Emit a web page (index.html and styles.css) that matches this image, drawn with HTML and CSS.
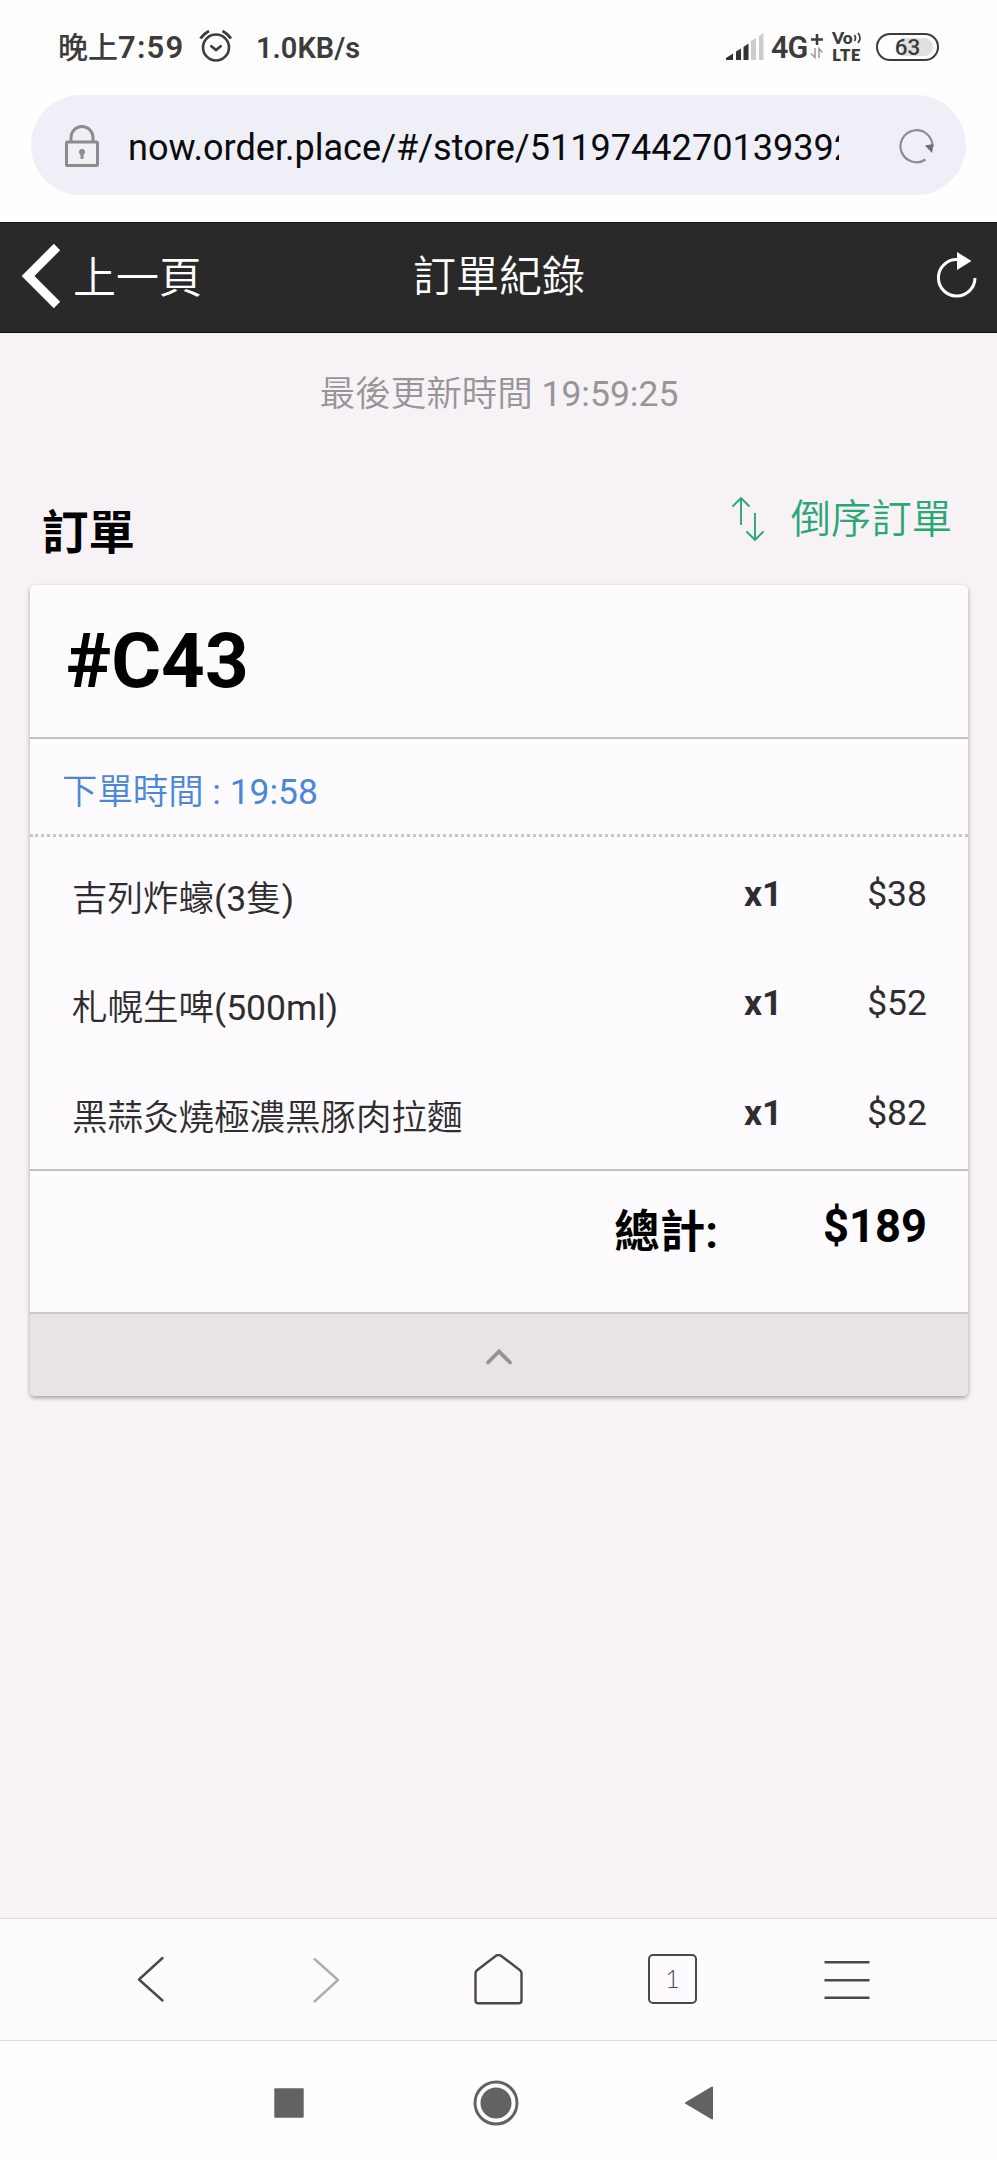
FILE: index.html
```html
<!DOCTYPE html>
<html lang="zh-Hant">
<head>
<meta charset="utf-8">
<title>訂單紀錄</title>
<link rel="stylesheet" href="styles.css">
</head>
<body>
<div class="status">
  <span class="clock">晚上<b>7:59</b></span>
  <svg class="alarm" width="34" height="34" viewBox="0 0 34 34" fill="none" stroke="#3c3c3c" stroke-width="2.6"><circle cx="17" cy="18.5" r="13"/><path d="M11.5 16.5l5.5 4.5 5.500-4.500"/><path d="M1.500 9.500Q5 4.500 10 2M32 9.500Q28.500 4.500 23.500 2" stroke-width="3"/></svg>
  <span class="speed">1.0KB/s</span>
  <svg class="signal" width="38" height="28" viewBox="0 0 38 28"><path fill="#333" d="M0 27v-2l7-4.500V27zM10 18.500l5-3V27h-5zM17.500 14l5-3.500V27h-5z"/><path fill="#ccc" d="M25 8l5-3v22h-5zM33 3l4.500-3v27H33z"/></svg>
  <span class="net">4G</span>
  <svg class="plus" width="14" height="28" viewBox="0 0 14 28" fill="none" stroke="#3c3c3c"><path d="M7 1v11M1 6.500h12" stroke-width="2.500"/><path d="M5 15v9.500L1 20.500M9 25v-9.500l3.500 4" stroke="#999" stroke-width="1.500"/></svg>
  <span class="volte"><span>Vo<svg width="9" height="12" viewBox="0 0 9 12" fill="none" stroke="#3c3c3c" stroke-width="1.700"><path d="M1.500 3q2 3 0 6M5 1q4 5 0 10"/></svg></span><span>LTE</span></span>
  <span class="battery">63</span>
</div>
<div class="address">
  <svg class="lock" width="34" height="42" viewBox="0 0 34 42" fill="none" stroke="#8c8c90" stroke-width="3"><rect x="1.500" y="17" width="31" height="23.500" rx="1" fill="#f1f1f3"/><path d="M6 17v-4.500a11 11 0 0 1 22 0V17"/><circle cx="17" cy="27" r="3" fill="#8c8c90" stroke="none"/><path d="M17 27v7"/></svg>
  <span class="url">now.order.place/#/store/511974427013939250</span>
  <svg class="reload" width="36" height="36" viewBox="0 0 36 36" fill="none" stroke="#8c8c90" stroke-width="2.200"><path d="M26.500 31.500A16 16 0 1 1 33.500 19"/><path d="M26 17.500l8.500-1.500-1.500 9z" fill="#6f6f73" stroke="none"/></svg>
</div>
<header class="topbar">
  <div class="back"><svg width="40" height="66" viewBox="0 0 40 66" fill="none" stroke="#fff" stroke-width="9"><path d="M36 4L7 33l29 29"/></svg><span>上一頁</span></div>
  <h1>訂單紀錄</h1>
  <svg class="refresh" width="40" height="48" viewBox="0 0 40 48" fill="none" stroke="#fff" stroke-width="3"><path d="M20.500 8.500A18.300 18.300 0 1 0 38 27"/><path d="M20 1l14.500 9L20 19z" fill="#fff" stroke="none"/></svg>
</header>
<main>
  <p class="updated"><span class="thin">最後更新時間</span> 19:59:25</p>
  <div class="heading">
    <h2>訂單</h2>
    <div class="sort"><svg width="34" height="46" viewBox="0 0 34 46" fill="none" stroke="#2aa775" stroke-width="1.900"><path d="M10 29V2M1.500 10.500L10 2l8.500 8.500M24 17v27M15.500 35.500L24 44l8.500-8.500"/></svg><span>倒序訂單</span></div>
  </div>
  <section class="card">
    <div class="number">#C43</div>
    <div class="time"><span class="thin">下單時間</span> : 19:58</div>
    <div class="items">
      <div class="row"><span class="name"><span class="thin">吉列炸蠔</span>(3<span class="thin">隻</span>)</span><b class="qty">x1</b><span class="price">$38</span></div>
      <div class="row"><span class="name"><span class="thin">札幌生啤</span>(500ml)</span><b class="qty">x1</b><span class="price">$52</span></div>
      <div class="row"><span class="name"><span class="thin">黑蒜灸燒極濃黑豚肉拉麵</span></span><b class="qty">x1</b><span class="price">$82</span></div>
    </div>
    <div class="total"><span class="label">總計:</span><span class="sum">$189</span></div>
    <div class="fold"><svg width="28" height="18" viewBox="0 0 28 18" fill="none" stroke="#969296" stroke-width="3.800" stroke-linecap="round"><path d="M3 15.500L14 4.500l11 11"/></svg></div>
  </section>
</main>
<nav class="browser">
  <svg width="50" height="52" viewBox="0 0 50 52" fill="none" stroke="#4b484b" stroke-width="2.400" stroke-linecap="round" stroke-linejoin="round"><path d="M36.500 4L13 25.500 36.500 46.500"/></svg>
  <svg width="50" height="52" viewBox="0 0 50 52" fill="none" stroke="#b0adb1" stroke-width="2.400" stroke-linecap="round" stroke-linejoin="round"><path d="M14.500 5L38 26 14.500 47.500"/></svg>
  <svg width="50" height="52" viewBox="0 0 50 52" fill="none" stroke="#4b484b" stroke-width="2.400" stroke-linejoin="round"><path d="M22 1.800Q24.500 .2 27 1.800L46 16.200Q47.500 17.400 47.500 19V46.500Q47.500 49.300 44.700 49.300H4.300Q1.500 49.300 1.500 46.500V19Q1.500 17.400 3 16.200Z"/></svg>
  <span class="tabs">1</span>
  <svg width="50" height="52" viewBox="0 0 50 52" fill="none" stroke="#4b484b" stroke-width="2.600"><path d="M2.500 8.300h45M2.500 26.200h45M2.500 43.800h45"/></svg>
</nav>
<div class="system">
  <svg width="30" height="30" viewBox="0 0 30 30"><rect x=".3" y=".3" width="29.400" height="29.400" rx="1" fill="#616361"/></svg>
  <svg width="46" height="46" viewBox="0 0 46 46"><circle cx="23" cy="23" r="21" fill="none" stroke="#616361" stroke-width="3"/><circle cx="23" cy="23" r="15.500" fill="#616361"/></svg>
  <svg width="30" height="34" viewBox="0 0 30 34" fill="#616361" stroke="#616361" stroke-width="2" stroke-linejoin="round"><path d="M28 1.500v31L2 17z"/></svg>
</div>
</body>
</html>
```
FILE: styles.css
```css
* { box-sizing: border-box; }
body {
  margin: 0;
  width: 997px;
  height: 2160px;
  display: flex;
  flex-direction: column;
  overflow: hidden;
  background: #fefefe;
  font-family: Roboto, "Noto Sans CJK TC", sans-serif;
  color: #000;
}
svg { display: block; flex: none; }
h1, h2, p { margin: 0; }
.thin { font-weight: 350; }

.status {
  flex: none;
  display: flex;
  align-items: center;
  height: 95px;
  padding: 0 55px 0 58px;
  color: #3c3c3c;
  line-height: 40px;
  white-space: nowrap;
}
.status > * { flex: none; }
.clock { width: 141px; font-size: 30px; font-weight: 500; }
.clock b { font-size: 31px; font-weight: 600; letter-spacing: 1.2px; }
.alarm { margin-top: -3px; }
.speed { width: 493px; padding-left: 23px; font-size: 29px; font-weight: 600; }
.signal { margin-top: -2px; margin-right: 7px; }
.net { width: 39px; font-size: 30.5px; font-weight: 600; letter-spacing: -1px; }
.plus { margin-top: -2px; margin-right: 8px; }
.volte {
  width: 44px;
  display: flex;
  flex-direction: column;
  font: 800 17px/16.5px Lato, sans-serif;
  margin-top: -2px;
}
.volte span { display: flex; align-items: center; }
.volte span + span { letter-spacing: .4px; }
.battery {
  width: 63px;
  height: 28px;
  border: 2.5px solid #3c3c3c;
  border-radius: 14px;
  background: linear-gradient(90deg, transparent 38%, #e0e0e0 38%) content-box;
  padding: 3px 4px;
  font-size: 22.5px;
  font-weight: 500;
  line-height: 18px;
  text-align: center;
  margin-top: -2px;
}

.address {
  flex: none;
  display: flex;
  align-items: center;
  height: 100px;
  margin: 0 31px;
  padding: 0 31px 0 34px;
  border-radius: 50px;
  background: #eeeff7;
}
.url {
  width: 711px;
  margin: 5px 0 0 29px;
  overflow: hidden;
  font-size: 36.1px;
  line-height: 50px;
  white-space: nowrap;
  color: #0b0b0e;
}
.lock { margin-bottom: -2px; }
.reload { margin-left: auto; margin-top: 2px; }

.topbar {
  flex: none;
  display: grid;
  grid-template-columns: 1fr auto 1fr;
  align-items: center;
  height: 111px;
  margin-top: 27px;
  padding: 0 20px 0 21px;
  background: #292929;
  border-top: 1px solid #111;
  border-bottom: 1px solid #111;
  color: #fff;
}
.back { display: flex; align-items: center; gap: 12px; margin-top: -3px; }
.back span, .topbar h1 { font-size: 43px; line-height: 60px; font-weight: 350; }
.back span { margin-top: 4px; }
.topbar h1 { margin-top: -1px; }
.refresh { justify-self: end; margin-top: -6px; }

main {
  flex: 1;
  min-height: 0;
  background: #f7f2f6;
}
.updated {
  padding: 36px 0 0 1px;
  text-align: center;
  font-size: 35.5px;
  line-height: 50px;
  color: #989498;
}
.heading {
  display: flex;
  justify-content: space-between;
  height: 166px;
  padding: 0 45px 0 42px;
}
.heading h2 { margin-top: 84px; font-size: 46.5px; line-height: 60px; font-weight: 700; }
.sort {
  display: flex;
  align-items: flex-start;
  gap: 26px;
  margin-top: 77px;
  color: #2aa775;
  font-size: 40.3px;
  line-height: 48px;
  font-weight: 350;
}
.card {
  height: 811px;
  margin: 0 29px 0 30px;
  border-radius: 5px;
  background: #fdfbfe;
  box-shadow: 0 2px 4px rgba(0, 0, 0, .35);
  overflow: hidden;
}
.number {
  height: 154px;
  padding-left: 36px;
  border-bottom: 2px solid #c2c0c3;
  font-size: 76.3px;
  line-height: 153px;
  font-weight: 700;
}
.time {
  height: 98px;
  padding: 5px 31px 0 32px;
  border-bottom: 3px dotted #c8c6c9;
  color: #4a87d8;
  font-size: 35.4px;
  line-height: 96px;
}
.items {
  height: 334px;
  padding: 8px 41px 0 42px;
  border-bottom: 2px solid #c2c0c3;
  color: #2f2d30;
  font-size: 35.5px;
}
.row { display: flex; height: 109.3px; line-height: 109px; }
.name { flex: 1; }
.qty, .price { margin-top: -5px; }
.qty { width: 79px; font-weight: 700; }
.price { width: 104px; text-align: right; }
.total {
  display: flex;
  justify-content: flex-end;
  height: 141px;
  padding: 26px 41px 0;
  font-size: 45.3px;
  font-weight: 700;
  line-height: 60px;
}
.label { margin-top: 6px; font-size: 45.5px; }
.sum { width: 209px; text-align: right; }
.fold {
  display: flex;
  justify-content: center;
  height: 84px;
  padding-top: 33px;
  border-top: 2px solid #cbc7ca;
  background: #e8e3e7;
}

.browser {
  flex: none;
  display: grid;
  grid-template-columns: repeat(5, 174px);
  justify-content: center;
  justify-items: center;
  height: 123px;
  padding-top: 35px;
  border-top: 1px solid #dedbdf;
  border-bottom: 1px solid #dfdfe0;
  background: #fdfbfe;
}
.tabs {
  width: 49px;
  height: 50px;
  border: 2.5px solid #4b484b;
  border-radius: 5px;
  color: #4b484b;
  font: 300 25px/44px Lato, sans-serif;
  text-align: center;
}
.system {
  flex: none;
  display: flex;
  align-items: center;
  height: 119px;
  padding: 5px 0 0 274px;
}
.system svg + svg { margin-left: 169px; }
.system svg + svg + svg { margin-left: 165px; }
```
